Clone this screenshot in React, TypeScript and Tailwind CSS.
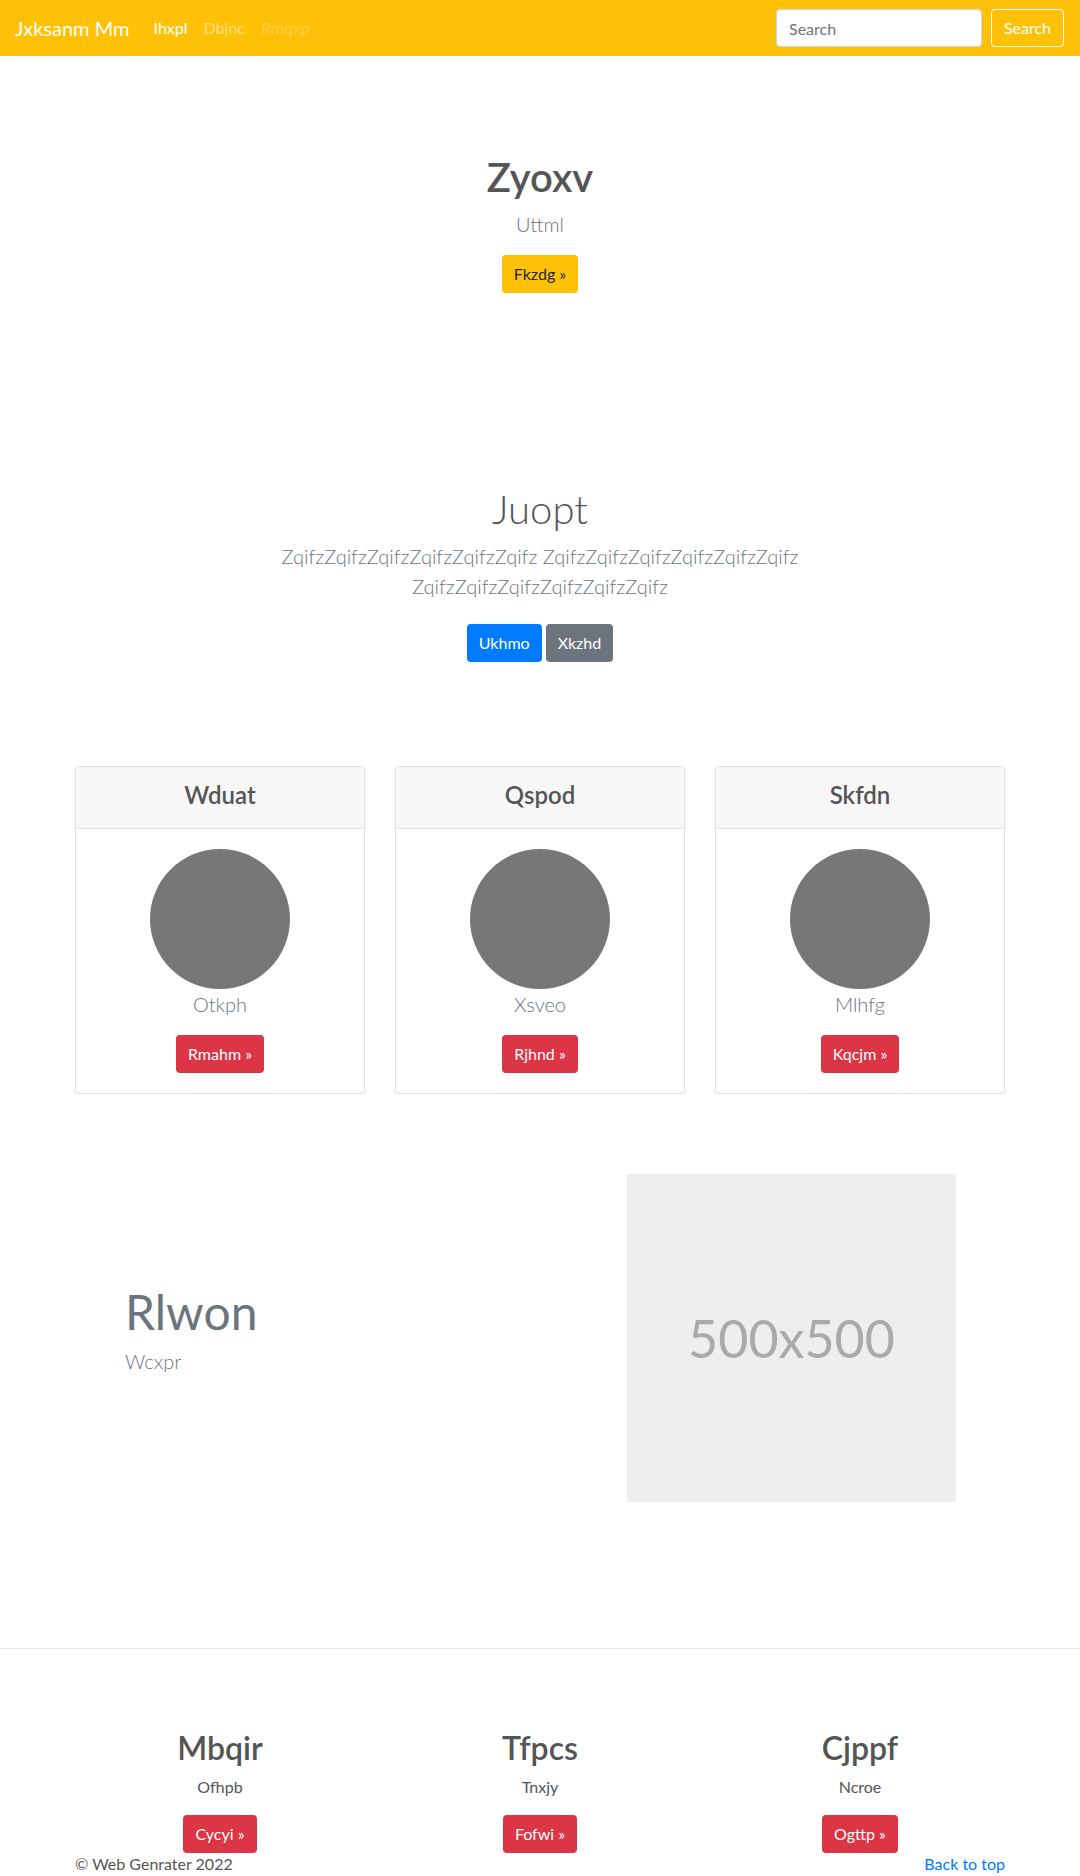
import React from "react";

const cards = [
  { title: "Wduat", text: "Otkph", btn: "Rmahm »" },
  { title: "Qspod", text: "Xsveo", btn: "Rjhnd »" },
  { title: "Skfdn", text: "Mlhfg", btn: "Kqcjm »" },
];

const cols = [
  { title: "Mbqir", text: "Ofhpb", btn: "Cycyi »" },
  { title: "Tfpcs", text: "Tnxjy", btn: "Fofwi »" },
  { title: "Cjppf", text: "Ncroe", btn: "Ogttp »" },
];

export default function App() {
  return (
    <div className="min-h-[1876px] bg-white font-['Lato','Noto_Sans',sans-serif] text-[#555] overflow-hidden">
      <nav className="h-14 bg-[#ffc107] flex items-center pl-[15px] pr-4">
        <a className="text-[20px] leading-[30px] text-white mr-4">Jxksanm Mm</a>
        <ul className="flex text-[16px] leading-6">
          <li className="px-2 text-white">Ihxpl</li>
          <li className="px-2 text-white/50">Dbjnc</li>
          <li className="px-2 text-white/25">Rmqxp</li>
        </ul>
        <form className="ml-auto flex items-center">
          <input
            className="w-[206px] h-[38px] rounded border border-[#ced4da] bg-white px-3 text-[16px] placeholder:text-[#6c757d] outline-none mr-[9px]"
            placeholder="Search"
          />
          <button type="button" className="w-[73px] h-[38px] rounded border border-white text-white text-[16px]">
            Search
          </button>
        </form>
      </nav>

      <section className="pt-[97px] text-center">
        <h1 className="text-[40px] leading-[48px] font-semibold text-[#555]">Zyoxv</h1>
        <p className="mt-2 text-[20px] leading-[30px] font-light text-[#6c757d]">Uttml</p>
        <button className="mt-4 h-[38px] px-3 rounded bg-[#ffc107] text-[#212529] text-[16px]">Fkzdg »</button>
      </section>

      <section className="mt-[192px] text-center">
        <div className="max-w-[640px] mx-auto">
          <h1 className="text-[40px] leading-[48px] font-light text-[#555]">Juopt</h1>
          <p className="mt-2 text-[20px] leading-[30px] font-light text-[#6c757d]">
            ZqifzZqifzZqifzZqifzZqifzZqifz ZqifzZqifzZqifzZqifzZqifzZqifz ZqifzZqifzZqifzZqifzZqifzZqifz
          </p>
          <div className="mt-[23px] flex justify-center gap-1">
            <button className="h-[38px] px-3 rounded bg-[#007bff] text-white text-[16px]">Ukhmo</button>
            <button className="h-[38px] px-3 rounded bg-[#6c757d] text-white text-[16px]">Xkzhd</button>
          </div>
        </div>
      </section>

      <section className="mt-[104px] w-[930px] mx-auto grid grid-cols-3 gap-[30px]">
        {cards.map((c) => (
          <div key={c.title} className="border border-[#dfdfdf] rounded bg-white text-center">
            <div className="h-[62px] pb-[6px] bg-[#f7f7f7] border-b border-[#dfdfdf] flex items-center justify-center">
              <h4 className="text-[24px] leading-[29px] font-semibold text-[#555]">{c.title}</h4>
            </div>
            <div className="p-5 flex flex-col items-center">
              <div className="w-[140px] h-[140px] rounded-full bg-[#777]" />
              <p className="text-[20px] leading-[30px] font-light text-[#6c757d]">{c.text}</p>
              <button className="mt-4 h-[38px] px-3 rounded bg-[#dc3545] text-white text-[16px]">{c.btn}</button>
            </div>
          </div>
        ))}
      </section>

      <section className="mt-[80px] flex">
        <div className="w-[627px] pl-[125px] pt-[108px]">
          <h2 className="text-[48px] leading-[60px] text-[#6c757d]">Rlwon</h2>
          <p className="mt-1 text-[20px] leading-[30px] font-light text-[#6c757d]">Wcxpr</p>
        </div>
        <div className="w-[329px] h-[328px] bg-[#eeeeee] flex items-center justify-center text-[52px] text-[#aaaaaa]">
          500x500
        </div>
      </section>

      <hr className="mt-[146px] border-0 border-t border-[#e5e5e5]" />

      <section className="mt-[80px] w-[960px] mx-auto grid grid-cols-3">
        {cols.map((c) => (
          <div key={c.title} className="text-center">
            <h2 className="text-[32px] leading-[38px] font-semibold text-[#555]">{c.title}</h2>
            <p className="mt-2 text-[16px] leading-6 text-[#555]">{c.text}</p>
            <button className="mt-4 h-[38px] px-3 rounded bg-[#dc3545] text-white text-[16px]">{c.btn}</button>
          </div>
        ))}
      </section>

      <footer className="-mt-px w-[930px] mx-auto flex justify-between text-[16px] leading-6">
        <span className="text-[#555]">© Web Genrater 2022</span>
        <a className="text-[#007bff]">Back to top</a>
      </footer>
    </div>
  );
}
